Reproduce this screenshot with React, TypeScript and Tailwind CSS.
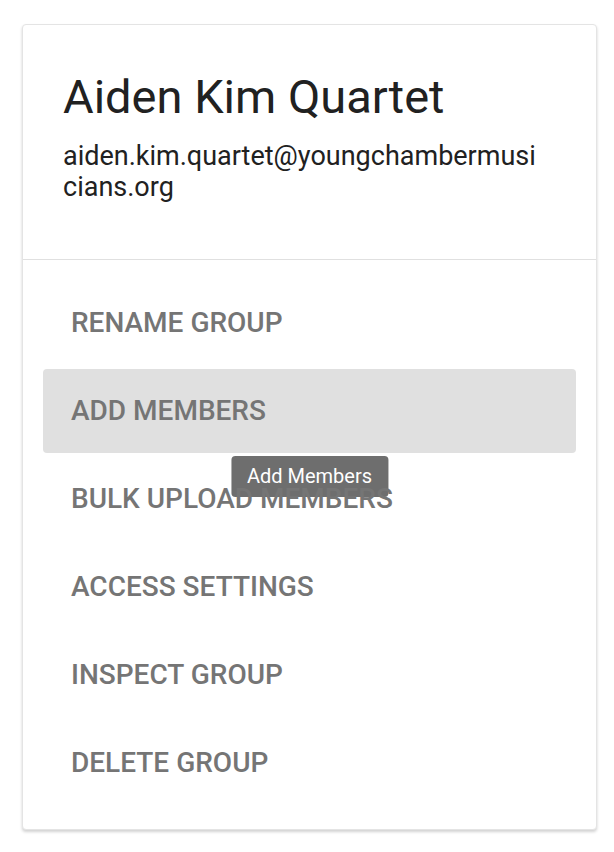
import React from 'react';

const menuItems = [
  'Rename Group',
  'Add Members',
  'Bulk Upload Members',
  'Access Settings',
  'Inspect Group',
  'Delete Group',
];

const ACTIVE = 'Add Members';

export default function App() {
  return (
    <div className="min-h-[852px] bg-white pt-6 pl-[22px] pr-[17px] font-['Roboto',sans-serif]">
      <div className="w-[575px] rounded-[4px] border border-[#e4e4e4] bg-white shadow-[0_2px_3px_rgba(0,0,0,0.18)]">
        {/* Header */}
        <div className="px-10 pt-[44px] pb-[56px]">
          <h1 className="text-[47px] leading-[1.2] font-normal text-[#212121]">Aiden Kim Quartet</h1>
          <p className="mt-[16px] text-[27px] leading-[31px] text-[#212121] break-all">
            aiden.kim.quartet@youngchambermusi
            <br />
            cians.org
          </p>
        </div>

        <div className="h-px bg-[#e0e0e0]" />

        {/* Actions */}
        <div className="flex flex-col gap-[4px] px-5 pt-[21px] pb-[24px]">
          {menuItems.map((item) => (
            <div
              key={item}
              className={`relative flex h-[84px] items-center rounded-[4px] px-7 text-[28px] font-medium uppercase text-[#757575] ${
                item === ACTIVE ? 'bg-[#e0e0e0]' : ''
              }`}
            >
              {item}
              {item === ACTIVE && (
                <div className="absolute left-1/2 top-[87px] -translate-x-1/2 whitespace-nowrap rounded-[4px] bg-[#6e6e6e] px-4 py-[9px] text-[20px] leading-[23px] font-normal normal-case text-white">
                  Add Members
                </div>
              )}
            </div>
          ))}
        </div>
      </div>
    </div>
  );
}
